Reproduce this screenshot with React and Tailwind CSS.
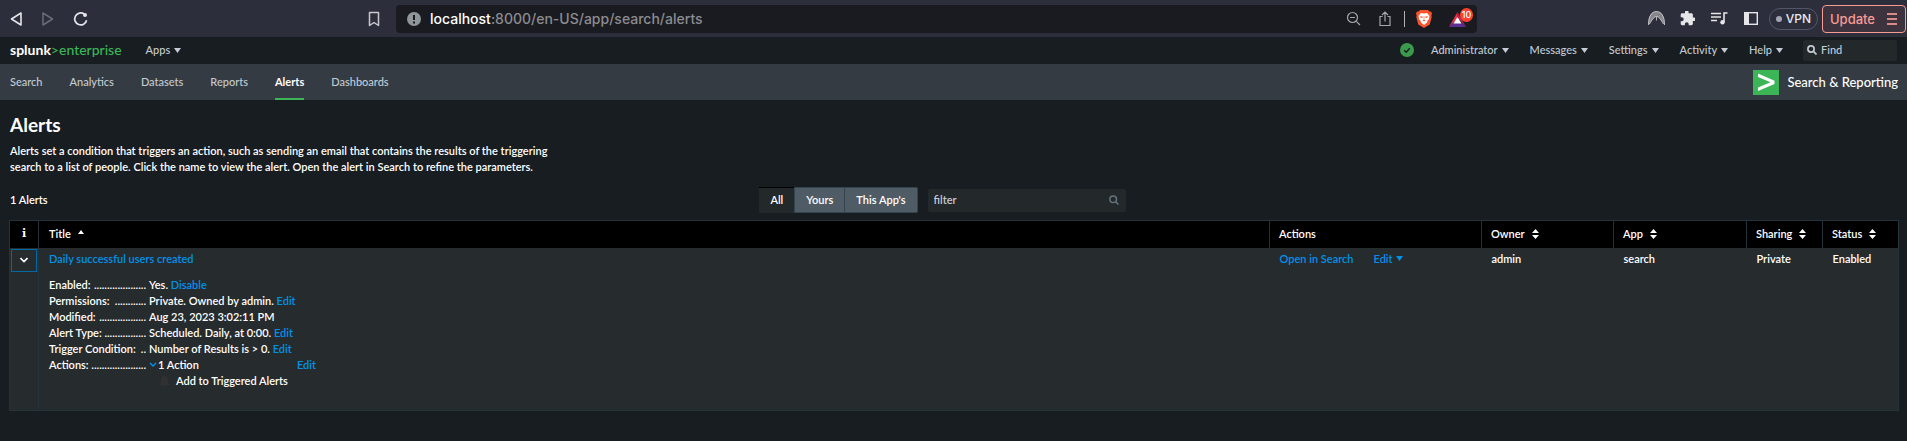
import React from "react";

const Caret = ({ className = "" }) => (
  <svg viewBox="0 0 7 5" className={`w-[7px] h-[5px] fill-current ${className}`} aria-hidden="true">
    <path d="M0 0h7L3.5 5z" />
  </svg>
);

const SortIcon = () => (
  <svg viewBox="0 0 7 10" className="w-[7px] h-[10px] fill-current" aria-hidden="true">
    <path d="M3.5 0L7 4H0zM0 6h7l-3.500 4z" />
  </svg>
);

const BrowserBar = () => (
  <div className="flex h-[37px] items-center bg-[#2c2e3b] pr-px font-['Inter','Liberation_Sans',sans-serif]">
    <div className="flex w-[396px] shrink-0 items-center pl-[10px]">
      <button aria-label="Back" className="mr-[19px]">
        <svg viewBox="0 0 13 16" className="h-4 w-[13px]" fill="none" stroke="#e4e5ea" strokeWidth="1.600" strokeLinejoin="round">
          <path d="M11 2v12L1.500 8z" />
        </svg>
      </button>
      <button aria-label="Forward" className="mr-[18px]">
        <svg viewBox="0 0 13 16" className="h-4 w-[13px]" fill="none" stroke="#6a6c78" strokeWidth="1.500" strokeLinejoin="round">
          <path d="M1 2v12l9.500-6z" />
        </svg>
      </button>
      <button aria-label="Reload">
        <svg viewBox="0 0 16 16" className="h-4 w-4" fill="none" stroke="#e4e5ea" strokeWidth="1.700">
          <path d="M13.600 9.200A6 6 0 1 1 11.200 3" />
          <circle cx="12" cy="4" r="2" fill="#e4e5ea" stroke="none" />
        </svg>
      </button>
      <button aria-label="Bookmark" className="mr-[16px] ml-auto">
        <svg viewBox="0 0 12 16" className="h-4 w-3" fill="none" stroke="#c8c9cf" strokeWidth="1.500" strokeLinejoin="round">
          <path d="M1.500 1.500h9v13L6 11.500l-4.500 3z" />
        </svg>
      </button>
    </div>
    <div className="flex h-7 min-w-0 flex-1 items-center rounded-[4px] bg-[#1a1b20] pr-[3px] pl-[11px]">
      <svg viewBox="0 0 14 14" className="mr-[9px] h-[14px] w-[14px]" aria-hidden="true">
        <circle cx="7" cy="7" r="7" fill="#8f979a" />
        <path d="M6 3h2v5H6zM6 9.500h2v2H6z" fill="#1a1b20" />
      </svg>
      <div className="text-[14px] whitespace-nowrap text-[#8b8c91]">
        <span className="text-white">localhost</span>:8000/en-US/app/search/alerts
      </div>
      <div className="ml-auto flex items-center">
        <svg viewBox="0 0 15 15" className="mr-[18px] h-[15px] w-[15px]" fill="none" stroke="#a5a6ab" strokeWidth="1.200" aria-hidden="true">
          <circle cx="6.500" cy="6.500" r="5" />
          <path d="M4 6.500h5M10.300 10.300L14 14" />
        </svg>
        <svg viewBox="0 0 12 16" className="mr-[13px] h-4 w-3" fill="none" stroke="#a5a6ab" strokeWidth="1.200" aria-hidden="true">
          <path d="M3.500 5.500H1v9h10v-9H8.500M6 10.500v-9M3 4l3-3 3 3" />
        </svg>
        <span className="mr-[11px] h-4 w-px bg-[#b0b1b6]" />
        <svg viewBox="0 0 16 18" className="mr-[17px] h-[18px] w-4" aria-hidden="true">
          <path d="M4 0h8l1.500 1.500 1.800.2.700 2.300-.7 1.500.4 1.500-2 7.500L8 18l-5.700-3.500L.3 7l.4-1.500L0 4l.7-2.300 1.800-.2z" fill="#fb542b" />
          <path d="M5 3l3 .5L11 3l2.500 3-.5 1.500.3 1-2 2.500-.3 1.500L8 15l-3-2.500-.3-1.500-2-2.500.3-1L2.500 6z" fill="#fff" />
          <path d="M4.500 6l2.300.7-.5 1.300-1.800-.6zM11.500 6l-2.300.7.5 1.300 1.800-.6zM6.500 10.300L8 9.600l1.500.7L8 11.500zM7.700 6h.6v3h-.6z" fill="#fb542b" />
        </svg>
        <div className="relative h-4 w-[25px]">
          <svg viewBox="0 0 17 16" className="h-4 w-[17px]" aria-hidden="true">
            <path d="M8.500 1L0 16l8.500-8z" fill="#e8304a" />
            <path d="M8.500 1L17 16 8.500 7z" fill="#b5254b" />
            <path d="M0 16h17l-4-4H4z" fill="#5b2e91" />
            <path d="M8.500 6l4 6.500h-8z" fill="#fff" />
          </svg>
          <span className="absolute -top-[3px] left-[11px] rounded-full bg-[#fb4130] px-[2px] text-[9px] leading-[14px] text-white">10</span>
        </div>
      </div>
    </div>
    <div className="ml-[171px] flex shrink-0 items-center">
      <svg viewBox="0 0 17 15" className="mr-[15px] h-[15px] w-[17px]" aria-hidden="true">
        <path d="M0 14C0 5 3.500 0 8.500 0S17 5 17 14l-1.500-1C12.500 9 11 6 8.500 6S4.500 9 1.500 13z" fill="#85868b" />
        <path d="M.5 14C.5 5 4 .6 8.500.6S16.500 5 16.500 14M1.500 13C4 9 5.500 5.500 8.500 5.500S13 9 15.500 13M8.500 5.500v4" fill="none" stroke="#c3c3c6" strokeWidth=".9" />
      </svg>
      <svg viewBox="1 2 21 21" className="mr-4 h-[15px] w-[15px]" aria-hidden="true">
        <path fill="#e6e6e8" d="M20.500 11H19V7c0-1.100-.9-2-2-2h-4V3.500a2.500 2.500 0 0 0-5 0V5H4c-1.100 0-2 .9-2 2v3.800h1.500a2.700 2.700 0 0 1 0 5.400H2V20c0 1.100.9 2 2 2h3.800v-1.500a2.700 2.700 0 0 1 5.400 0V22H17c1.100 0 2-.9 2-2v-4h1.500a2.500 2.500 0 0 0 0-5z" />
      </svg>
      <svg viewBox="0 0 17 13" className="mr-4 h-[13px] w-[17px]" fill="none" stroke="#e6e6e8" strokeWidth="1.600" aria-hidden="true">
        <path d="M0 1.500h10M0 5h10M0 8.500h6M13 10V1h3.500" />
        <circle cx="11.500" cy="10.300" r="2.200" fill="#e6e6e8" stroke="none" />
      </svg>
      <svg viewBox="0 0 14 13" className="mr-[11px] h-[13px] w-[14px]" aria-hidden="true">
        <rect x=".7" y=".7" width="12.600" height="11.600" fill="none" stroke="#e6e6e8" strokeWidth="1.400" />
        <path d="M0 0h5v13H0z" fill="#e6e6e8" />
      </svg>
      <button className="mr-1 flex h-[22px] items-center gap-1 rounded-full border border-[#53566a] px-[6px] text-[12px] font-medium text-[#e8e9ee]">
        <span className="h-[6px] w-[6px] rounded-full bg-[#a3a4b5]" />
        VPN
      </button>
      <button className="flex h-7 items-center gap-3 rounded-[4px] border border-[#f79c95] bg-[#3d333f] pr-2 pl-[7px] text-[13px] font-medium text-[#f79c95]">
        Update
        <svg viewBox="0 0 10 12" className="h-3 w-[10px]" stroke="#d98a86" strokeWidth="1.800" aria-hidden="true">
          <path d="M0 1h10M0 6h10M0 11h10" />
        </svg>
      </button>
    </div>
  </div>
);

const menus = ["Administrator", "Messages", "Settings", "Activity", "Help"];

const TopBar = () => (
  <div className="flex h-[27px] items-center bg-[#171d21] pr-[10px] pb-px pl-[10px] text-[#c3cbd4]">
    <a href="#home" className="mr-6 text-[14px] whitespace-nowrap text-[#3cb557]">
      <span className="font-bold text-white">splunk</span>&gt;enterprise
    </a>
    <button className="flex items-center gap-1">
      Apps <Caret />
    </button>
    <div className="ml-auto flex items-center">
      <svg viewBox="0 0 14 14" className="mr-[17px] h-[14px] w-[14px]" aria-label="Healthy">
        <circle cx="7" cy="7" r="7" fill="#3c9a4c" />
        <path d="M4.200 7.200l2 2 3.600-4" fill="none" stroke="#171d21" strokeWidth="1.400" />
      </svg>
      <div className="mr-5 flex gap-[21px]">
        {menus.map((m) => (
          <button key={m} className="flex items-center gap-1">
            {m} <Caret />
          </button>
        ))}
      </div>
      <label className="flex h-[21px] w-[94px] items-center gap-1 rounded-[2px] bg-[#23282a] pl-1">
        <svg viewBox="0 0 10 10" className="h-[10px] w-[10px] shrink-0" fill="none" stroke="currentColor" strokeWidth="1.700" aria-hidden="true">
          <circle cx="4" cy="4" r="3.100" />
          <path d="M6.200 6.200L9.500 9.500" />
        </svg>
        <input aria-label="Find" placeholder="Find" className="w-full min-w-0 bg-transparent outline-none placeholder:text-[#c3cbd4]" />
      </label>
    </div>
  </div>
);

const tabs = ["Search", "Analytics", "Datasets", "Reports", "Alerts", "Dashboards"];

const NavBar = () => (
  <nav className="flex h-9 items-center justify-between bg-[#343b43] pr-[9px] pl-[10px]">
    <div className="flex h-full gap-[27px]">
      {tabs.map((t) => (
        <a
          key={t}
          href={`#${t.toLowerCase()}`}
          className={
            t === "Alerts"
              ? "flex items-center border-y-2 border-t-transparent border-b-[#3cb557] font-bold text-white"
              : "flex items-center text-[#c3cbd4]"
          }
        >
          {t}
        </a>
      ))}
    </div>
    <a href="#app" className="flex items-center gap-2 text-[13px] font-medium text-white">
      <svg viewBox="0 0 26 25" className="h-[25px] w-[26px]" aria-hidden="true">
        <path d="M0 0h26v25H0z" fill="#3cb557" />
        <path d="M5 3.500l16.500 7.200v3.200L5 21v-3.500l12.500-5.200L5 7z" fill="#fff" />
      </svg>
      Search &amp; Reporting
    </a>
  </nav>
);

const Link = ({ children }) => (
  <a href="#edit" className="text-[#0092ea]">
    {children}
  </a>
);

const details = [
  ["Enabled:", 20, "Yes.", "Disable"],
  ["Permissions:", 12, "Private. Owned by admin.", "Edit"],
  ["Modified:", 18, "Aug 23, 2023 3:02:11 PM", null],
  ["Alert Type:", 16, "Scheduled. Daily, at 0:00.", "Edit"],
  ["Trigger Condition:", 2, "Number of Results is > 0.", "Edit"],
];

const Term = ({ dots, children }) => (
  <dt className="flex w-[100px] shrink-0 justify-between pr-[3px] whitespace-nowrap">
    {children}
    <span aria-hidden="true">{".".repeat(dots)}</span>
  </dt>
);

const Details = () => (
  <dl className="mt-[10px]">
    {details.map(([k, dots, v, link]) => (
      <div key={k} className="flex">
        <Term dots={dots}>{k}</Term>
        <dd>
          {v} {link && <Link>{link}</Link>}
        </dd>
      </div>
    ))}
    <div className="flex">
      <Term dots={21}>Actions:</Term>
      <dd className="w-[167px]">
        <div className="flex items-center justify-between">
          <button className="flex items-center gap-px">
            <svg viewBox="0 0 8 6" className="h-[6px] w-2" fill="none" stroke="#0092ea" strokeWidth="1.500" aria-hidden="true">
              <path d="M1 1l3 3 3-3" />
            </svg>
            1 Action
          </button>
          <Link>Edit</Link>
        </div>
        <div className="flex items-center gap-[6px] pl-[10px]">
          <svg viewBox="0 0 11 12" className="h-3 w-[11px] fill-[#303030]" aria-hidden="true">
            <path d="M5.500 0a1 1 0 0 1 1 1C8.500 1.600 9 3.500 9 5v2.500L11 10H0l2-2.500V5c0-1.500.5-3.400 2.500-4a1 1 0 0 1 1-1zM4 10.500h3a1.500 1.500 0 0 1-3 0z" />
          </svg>
          Add to Triggered Alerts
        </div>
      </dd>
    </div>
  </dl>
);

const columns = [
  ["Actions", "w-[212px]", false],
  ["Owner", "w-[132px]", true],
  ["App", "w-[133px]", true],
  ["Sharing", "w-[76px]", true],
  ["Status", "w-[76px]", true],
];

const AlertsTable = () => (
  <table className="w-full table-fixed border-collapse border border-[#24323c] text-left">
    <thead className="bg-black">
      <tr className="h-[27px]">
        <th className="w-[29px] border-r border-[#24323c] pb-px text-center font-['DejaVu_Serif',serif] text-[11px] font-bold">i</th>
        <th className="px-[10px] pb-px font-semibold">
          <button className="flex items-center gap-[7px]">
            Title
            <svg viewBox="0 0 6 8" className="h-2 w-[6px] fill-current" aria-hidden="true">
              <path d="M3 0l3 4H0z" />
            </svg>
          </button>
        </th>
        {columns.map(([name, width, sortable]) => (
          <th key={name} className={`${width} border-l border-[#24323c] px-[9px] pb-px font-semibold`}>
            {sortable ? (
              <button className="flex items-center gap-[7px]">
                {name} <SortIcon />
              </button>
            ) : (
              name
            )}
          </th>
        ))}
      </tr>
    </thead>
    <tbody className="bg-[#262b2d]">
      <tr className="align-top">
        <td className="border-r border-[#24323c] p-px">
          <button aria-label="Collapse" className="flex h-[23px] w-full items-center justify-center border border-[#006aa5]">
            <svg viewBox="0 0 8 6" className="h-[6px] w-2" fill="none" stroke="#fff" strokeWidth="1.600" aria-hidden="true">
              <path d="M.5 1L4 4.500 7.500 1" />
            </svg>
          </button>
        </td>
        <td className="px-[10px] pt-[3px] pb-[21px]">
          <Link>Daily successful users created</Link>
          <Details />
        </td>
        <td className="px-[10px] pt-[3px]">
          <div className="flex gap-5">
            <Link>Open in Search</Link>
            <button className="flex items-center gap-[3px] text-[#0092ea]">
              Edit <Caret />
            </button>
          </div>
        </td>
        <td className="px-[10px] pt-[3px]">admin</td>
        <td className="px-[10px] pt-[3px]">search</td>
        <td className="px-[10px] pt-[3px]">Private</td>
        <td className="px-[10px] pt-[3px]">Enabled</td>
      </tr>
    </tbody>
  </table>
);

export default function App() {
  return (
    <div className="min-h-screen bg-[#171d21] font-['Lato','Liberation_Sans',sans-serif] text-[11px] leading-4 font-medium text-white">
      <BrowserBar />
      <TopBar />
      <NavBar />
      <main className="pr-2 pl-[9px] font-semibold">
        <div className="pt-[13px] pl-px">
          <h1 className="text-[19px] leading-6 font-bold">Alerts</h1>
          <p className="mt-[6px] max-w-[560px]">
            Alerts set a condition that triggers an action, such as sending an email that contains the results of the triggering
            search to a list of people. Click the name to view the alert. Open the alert in Search to refine the parameters.
          </p>
        </div>
        <div className="mt-[12px] mb-[7px] grid grid-cols-[1fr_auto_1fr] items-center pl-px">
          <h2>1 Alerts</h2>
          <div className="mr-6 flex items-center">
            <div className="flex h-[26px]">
              <button className="border-y border-t-black border-b-transparent bg-[#23282a] px-[11px]">All</button>
              <button className="border border-[#33454f] bg-[#4f5c66] px-[11px]">Yours</button>
              <button className="rounded-r-[2px] border border-l-0 border-[#33454f] bg-[#4f5c66] px-[11px]">This App's</button>
            </div>
            <label className="ml-[10px] flex h-[23px] w-[198px] items-center rounded-[2px] bg-[#23282a] pr-[7px] pl-[6px]">
              <input aria-label="Filter alerts" placeholder="filter" className="w-full min-w-0 bg-transparent outline-none placeholder:text-[#c3cbd4]" />
              <svg viewBox="0 0 10 10" className="h-[10px] w-[10px] shrink-0" fill="none" stroke="#66727d" strokeWidth="1.500" aria-hidden="true">
                <circle cx="4.200" cy="4.200" r="3.300" />
                <path d="M6.500 6.500L9.500 9.500" />
              </svg>
            </label>
          </div>
        </div>
        <AlertsTable />
      </main>
    </div>
  );
}
